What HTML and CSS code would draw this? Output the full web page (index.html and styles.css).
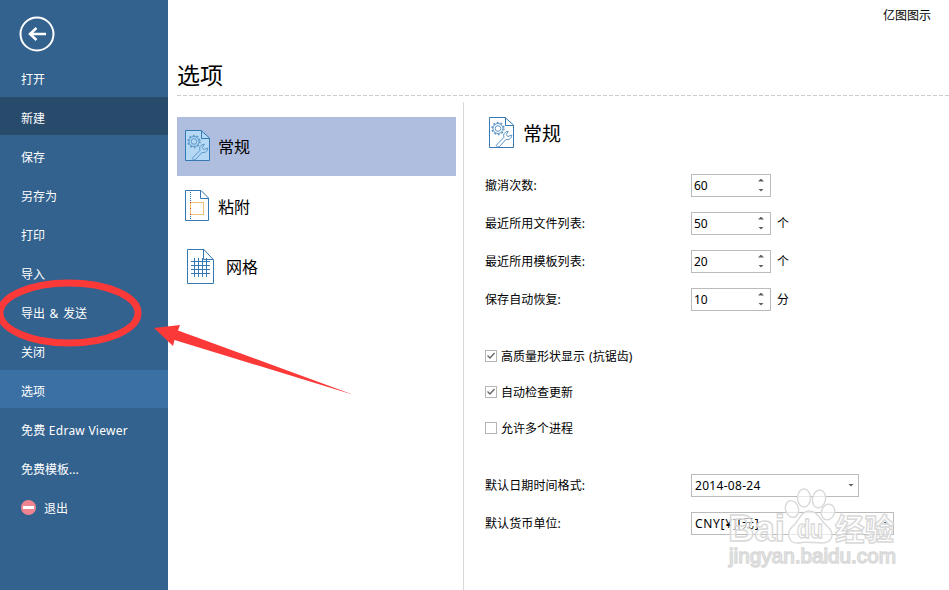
FILE: index.html
```
<!DOCTYPE html>
<html lang="zh-CN">
<head>
<meta charset="utf-8">
<title>选项</title>
<link rel="stylesheet" href="styles.css">
</head>
<body>
<svg class="defs" width="0" height="0" aria-hidden="true">
  <symbol id="gear-page" viewBox="0 0 26 32">
    <path class="page-body" d="M1.500 1.500H17L25.500 9V31.500H1.500Z"/>
    <path class="page-line" d="M17.500 1.500V9.500H25.500"/>
    <circle class="gear-teeth" cx="10" cy="12.500" r="5.900"/>
    <circle class="gear-line" cx="10" cy="12.500" r="5"/>
    <circle class="gear-line" cx="10" cy="12.500" r="2.800"/>
    <path class="gear-line" d="M8 29.500L16 21.300C14.800 18.200 16.800 15.500 20.300 15.300L18.300 18.600L19.800 20.600L23.800 19C23.800 22.400 20.800 24.300 18 23.400L11.500 30.500Q9.300 31.800 8 29.500Z"/>
  </symbol>
</svg>
<div class="app">
  <nav class="sidebar">
    <button class="back" aria-label="返回">
      <svg width="36" height="36" viewBox="0 0 36 36"><circle cx="18" cy="18" r="16.500" fill="none" stroke="#fff" stroke-width="2"/><path d="M27 18H11.500M17.500 12L11 18L17.500 24" fill="none" stroke="#fff" stroke-width="2.500"/></svg>
    </button>
    <a class="item">打开</a>
    <a class="item current">新建</a>
    <a class="item">保存</a>
    <a class="item">另存为</a>
    <a class="item">打印</a>
    <a class="item">导入</a>
    <a class="item spaced">导出 &amp; 发送</a>
    <a class="item">关闭</a>
    <a class="item selected">选项</a>
    <a class="item latin">免费 Edraw Viewer</a>
    <a class="item">免费模板...</a>
    <a class="item"><span class="exit-icon"></span>退出</a>
  </nav>
  <main class="main">
    <div class="app-name">亿图图示</div>
    <h1>选项</h1>
    <div class="rule"></div>
    <div class="columns">
      <div class="tabs">
        <div class="tab active"><svg class="icon" width="26" height="32"><use href="#gear-page"/></svg><span>常规</span></div>
        <div class="tab"><svg class="icon" width="26" height="32" viewBox="0 0 26 32"><path class="page-body" d="M1.500 1.500H17L24.500 9V31.500H1.500Z"/><path class="page-line" d="M16.500 1.500V9.500H24.500"/><path d="M6.500 3V31" stroke="#2d73b0" stroke-dasharray="1 1"/><rect x="6.500" y="13.500" width="13" height="12" fill="none" stroke="#edc274"/><path d="M6 13.500h1M6 19.500h1M6 25.500h1" stroke="#e5382f"/></svg><span>粘附</span></div>
        <div class="tab wide"><svg class="icon" width="28" height="36" viewBox="0 0 28 36"><path class="page-body" d="M.5 1.500H17L26.500 12V35.500H.5Z"/><path class="page-line" d="M16.500 1.500V11.500H26.500"/><path class="page-line" d="M7.500 10V29M11.500 10V29M15.500 10V29M19.500 10V29M4 13.500H23M4 17.500H23M4 21.500H23M4 25.500H23"/></svg><span>网格</span></div>
      </div>
      <section class="panel">
        <h2><svg class="icon" width="26" height="32"><use href="#gear-page"/></svg><span>常规</span></h2>
        <div class="row"><label>撤消次数:</label><span class="field spin"><span>60</span><i class="arrows"></i></span></div>
        <div class="row"><label>最近所用文件列表:</label><span class="field spin"><span>50</span><i class="arrows"></i></span><span class="unit">个</span></div>
        <div class="row"><label>最近所用模板列表:</label><span class="field spin"><span>20</span><i class="arrows"></i></span><span class="unit">个</span></div>
        <div class="row"><label>保存自动恢复:</label><span class="field spin"><span>10</span><i class="arrows"></i></span><span class="unit">分</span></div>
        <div class="checks">
          <div class="check"><svg class="box" width="12" height="12"><rect x=".5" y=".5" width="11" height="11"/><path d="M2.500 5.500L5 8L9.500 3"/></svg><span>高质量形状显示 (抗锯齿)</span></div>
          <div class="check"><svg class="box" width="12" height="12"><rect x=".5" y=".5" width="11" height="11"/><path d="M2.500 5.500L5 8L9.500 3"/></svg><span>自动检查更新</span></div>
          <div class="check"><svg class="box" width="12" height="12"><rect x=".5" y=".5" width="11" height="11"/></svg><span>允许多个进程</span></div>
        </div>
        <div class="row"><label>默认日期时间格式:</label><span class="field date"><span>2014-08-24</span><i class="caret"></i></span></div>
        <div class="row"><label>默认货币单位:</label><span class="field currency"><span>CNY[¥][元]</span><i class="caret"></i></span></div>
      </section>
    </div>
  </main>
  <svg class="overlay" width="949" height="590" viewBox="0 0 949 590">
    <g class="mark">
      <ellipse cx="792" cy="509" rx="6.500" ry="8.500" transform="rotate(-15 792 509)"/>
      <ellipse cx="804" cy="498" rx="6.500" ry="9"/>
      <ellipse cx="819" cy="499" rx="6.500" ry="9" transform="rotate(10 819 499)"/>
      <ellipse cx="828" cy="512" rx="6.500" ry="8" transform="rotate(20 828 512)"/>
      <path d="M809 511C818 511 820 520 827 526C836 534 832 543 822 543C814 543 806 541 799 543C788 544 786 533 792 527C799 521 801 511 809 511Z"/>
      <text class="brand" x="728" y="541" textLength="57" lengthAdjust="spacingAndGlyphs">Bai</text>
      <text class="brand du" x="797" y="538" textLength="26" lengthAdjust="spacingAndGlyphs">du</text>
      <text class="brand cn" x="835" y="540" textLength="59" lengthAdjust="spacingAndGlyphs">经验</text>
      <text class="url" x="729" y="563" textLength="167" lengthAdjust="spacingAndGlyphs">jingyan.baidu.com</text>
    </g>
    <ellipse cx="69" cy="313" rx="69" ry="30" fill="none" stroke="#fb3939" stroke-width="7"/>
    <path d="M154 328L180 325L178 330.500L354 395L174.500 340L173 346Z" fill="#fb3939"/>
  </svg>
</div>
</body>
</html>
```
FILE: styles.css
```
* { box-sizing: border-box; }
body {
  margin: 0;
  background: #fff;
  color: #000;
  font: 12px/20px "Noto Sans", "Noto Sans CJK SC", sans-serif;
}
.defs { position: absolute; }
.app {
  position: relative;
  display: flex;
  width: 949px;
  height: 590px;
  overflow: hidden;
}
.sidebar {
  flex: none;
  display: flex;
  flex-direction: column;
  gap: 1px;
  width: 168px;
  background: #33628e;
  color: #fff;
}
.back {
  display: flex;
  align-items: flex-start;
  height: 57px;
  padding: 16px 0 0 19px;
  border: 0;
  background: none;
}
.item {
  display: flex;
  align-items: center;
  height: 38px;
  padding: 6px 0 0 21px;
  white-space: nowrap;
}
.spaced { word-spacing: 1.5px; }
.latin { letter-spacing: .25px; }
.current { background: #284a6b; }
.selected { background: #3b70a4; }
.exit-icon {
  display: flex;
  align-items: center;
  justify-content: center;
  width: 15px;
  height: 15px;
  margin: -3px 8px 0 0;
  border-radius: 50%;
  background: #f08590;
}
.exit-icon::before {
  content: "";
  width: 11px;
  height: 3px;
  background: #fff;
}
.main {
  flex: 1;
  display: flex;
  flex-direction: column;
  padding-left: 9px;
}
.app-name {
  height: 56px;
  padding: 6px 18px 0 0;
  text-align: right;
}
h1 {
  height: 39px;
  margin: 0;
  font-size: 23px;
  font-weight: 400;
  line-height: 38px;
}
.rule {
  height: 1px;
  background: repeating-linear-gradient(90deg, #ccc 0 4px, transparent 4px 6px);
}
.columns { display: flex; flex: 1; }
.tabs {
  width: 279px;
  padding-top: 21px;
  margin-right: 7px;
}
.tab {
  display: flex;
  align-items: center;
  gap: 8px;
  height: 60px;
  padding: 0 0 3px 7px;
  font-size: 16px;
}
.tab span { padding-top: 4px; }
.active { background: #afbddf; height: 59px; }
.wide { padding-left: 10px; gap: 11px; padding-bottom: 0; }
.wide span { padding-top: 2px; }
.icon { flex: none; }
.active .icon { --page: #b5d8f4; }
.page-body { fill: var(--page, #fff); stroke: #3478b4; }
.page-line { fill: none; stroke: #3478b4; }
.gear-line { fill: none; stroke: #5b96c9; }
.gear-teeth {
  fill: none;
  stroke: #5b96c9;
  stroke-width: 1.5;
  stroke-dasharray: 1.8 1.9;
}
.panel {
  flex: 1;
  margin-top: 6px;
  padding: 14px 0 0 21px;
  border-left: 1px solid #d8d8d8;
}
h2 {
  display: flex;
  align-items: center;
  gap: 9px;
  height: 32px;
  margin: 0 0 18px 3px;
  font-size: 19px;
  font-weight: 400;
}
h2 span { padding-top: 4px; }
.row {
  display: flex;
  align-items: center;
  height: 38px;
}
.row label { width: 206px; padding-top: 2px; letter-spacing: .1px; }
.unit { padding-top: 2px; }
.field {
  display: flex;
  align-items: center;
  justify-content: space-between;
  height: 23px;
  padding: 0 6px 0 2px;
  border: 1px solid #bbb;
  background: #fff;
}
.field span { padding-top: 2px; }
.spin { width: 80px; margin-right: 6px; }
.date { width: 168px; padding: 0 4px 0 3px; letter-spacing: .3px; }
.currency { width: 203px; padding: 0 4px 0 3px; letter-spacing: .7px; }
.arrows {
  display: flex;
  flex-direction: column;
  gap: 7px;
}
.arrows::before, .arrows::after, .caret {
  content: "";
  width: 6px;
  height: 3px;
  background: #606060;
  clip-path: polygon(0 0, 100% 0, 50% 100%);
}
.arrows::before { clip-path: polygon(50% 0, 100% 100%, 0 100%); }
.checks { padding: 20px 0 20px; }
.check {
  display: flex;
  align-items: center;
  gap: 4px;
  height: 36px;
}
.check span { padding-top: 2px; word-spacing: 1px; }
.box { fill: #fff; stroke: #b5b5b5; }
.box path { fill: none; stroke: #666; stroke-width: 1.3; }
.overlay { position: absolute; inset: 0; pointer-events: none; }
.mark {
  fill: #fff;
  fill-opacity: .65;
  stroke: #d9d9d9;
  stroke-width: 1.4;
}
.brand { font: 700 36px "Liberation Sans", sans-serif; }
.du { font-size: 25px; }
.cn { font: 700 30px "Noto Sans CJK SC", sans-serif; }
.url { font: 20px "Liberation Sans", sans-serif; }
```
